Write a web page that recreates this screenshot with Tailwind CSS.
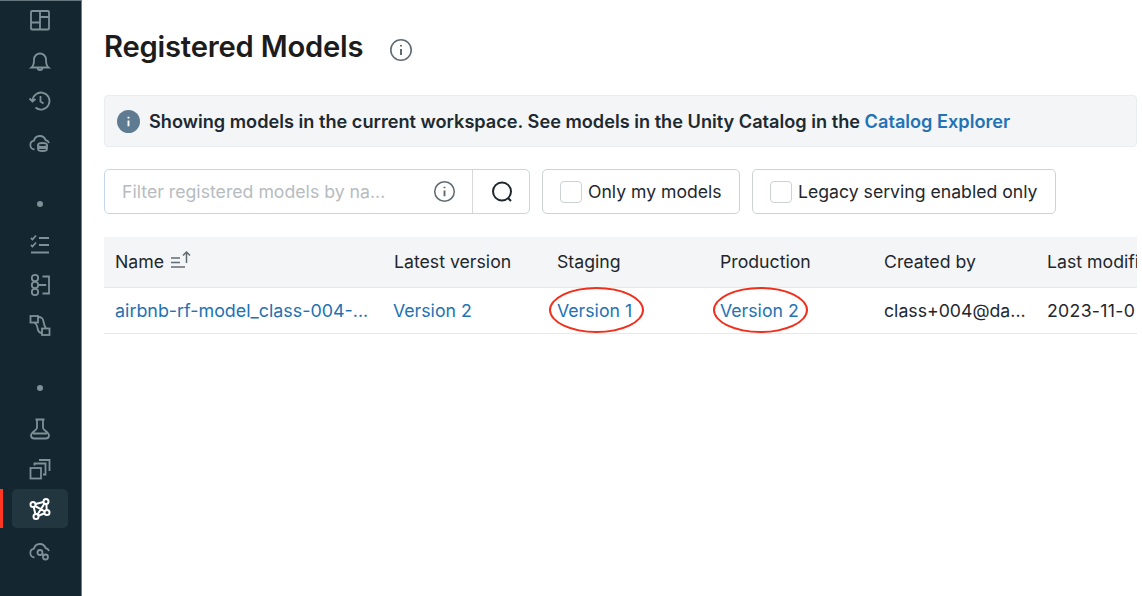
<!DOCTYPE html>
<html>
<head>
<meta charset="utf-8">
<script src="https://cdn.jsdelivr.net/npm/@tailwindcss/browser@4"></script>
</head>
<body class="bg-white">
<div class="flex h-[596px] w-[1142px] overflow-hidden font-['Inter','Liberation_Sans',sans-serif] text-[#1f272d]">
  <aside class="relative flex h-full w-[82px] shrink-0 flex-col items-center border-t border-r border-t-[#66767e] border-r-[#6d7f88] bg-[#14262f] pt-[7px] pr-[1px] text-[#7f9098]">
    <svg class="h-6 w-6" viewBox="0 0 24 24" fill="none" stroke="currentColor" stroke-width="1.800"><rect x="3" y="3" width="18" height="18.500" rx="1"/><path d="M12 3v18.500M3 14.500h9M12 9h9"/></svg>
    <svg class="mt-[17px] h-6 w-6" viewBox="0 0 24 24" fill="none" stroke="currentColor" stroke-width="1.800"><path d="M3.500 18.500h17c-2-1.500-2.500-3-2.500-8a6 6 0 0 0-12 0c0 5-.5 6.500-2.500 8zM9.500 18.500a2.500 2.500 0 0 0 5 0"/></svg>
    <svg class="mt-[16px] h-6 w-6" viewBox="0 0 24 24" fill="none" stroke="currentColor" stroke-width="1.800"><path d="M4.500 12a8.500 8.500 0 1 1 3 6.500M1.500 9.500l3 3 3-2.500M12.500 7v5.500l3 2"/></svg>
    <svg class="mt-[17px] h-6 w-6" viewBox="0 0 24 24" fill="none" stroke="currentColor" stroke-width="1.800"><path d="M6.500 19.500a4.500 4.500 0 0 1-.5-8.900 6 6 0 0 1 11.500-.6 4.500 4.500 0 0 1 3.500 3"/><ellipse cx="14.500" cy="15" rx="4.500" ry="2"/><path d="M10 15v4c0 1.100 2 2 4.500 2s4.500-.9 4.500-2v-4M10 18h9"/></svg>
    <div class="mt-[47px] h-[6px] w-[6px] rounded-full bg-[#7f9098]"></div>
    <svg class="mt-[26px] h-6 w-6" viewBox="0 0 24 24" fill="none" stroke="currentColor" stroke-width="1.800"><path d="M3 5l1.500 1.500L8 2.500M3 12l1.500 1.500 3.500-4M11 5h10M11 12h10M3 19.500h18"/></svg>
    <svg class="mt-[16px] h-6 w-6" viewBox="0 0 24 24" fill="none" stroke="currentColor" stroke-width="1.800"><circle cx="7" cy="5" r="3.200"/><circle cx="7" cy="12" r="3.200"/><circle cx="7" cy="19" r="3.200"/><path d="M10.200 12h8M14.500 3.500h6.500v17h-6.500"/></svg>
    <svg class="mt-[16px] h-6 w-6" viewBox="0 0 24 24" fill="none" stroke="currentColor" stroke-width="1.800"><rect x="2.500" y="3" width="7.500" height="6.500"/><rect x="14" y="15.500" width="7.500" height="6.500"/><path d="M10 4c4 0 5 1.500 5.500 4.500.4 2.500 1 5 2.500 7M6 9.500c2 .8 3 2.500 3.500 5.500.5 3 2 5 4.500 5"/></svg>
    <div class="mt-[48px] h-[6px] w-[6px] rounded-full bg-[#7f9098]"></div>
    <svg class="mt-[26px] h-6 w-6" viewBox="0 0 24 24" fill="none" stroke="currentColor" stroke-width="1.800"><path d="M7.500 2.500h9M9 2.500V11C9 13 3 15 3 18.500 3 20.500 4.500 21.500 6.500 21.500H17.500C19.500 21.500 21 20.500 21 18.500 21 15 15 13 15 11V2.500M5 16.500h14"/></svg>
    <svg class="mt-[16px] h-6 w-6" viewBox="0 0 24 24" fill="none" stroke="currentColor" stroke-width="1.800"><rect x="2.500" y="11" width="10.500" height="10.500"/><path d="M6.500 8.500V6.500H17.500V17.500H15M11 3h10.500V14"/></svg>
    <div class="mt-[8px] flex h-[39px] w-[56px] items-center justify-center rounded-[5px] bg-[#22363f] text-white">
      <svg class="h-6 w-6" viewBox="0 0 24 24" fill="none" stroke="currentColor" stroke-width="2"><circle cx="5" cy="7.500" r="2.500"/><circle cx="18" cy="4.500" r="2.500"/><circle cx="19" cy="15.500" r="2.500"/><circle cx="8" cy="19.500" r="2.500"/><path d="M7.500 7l8-2M7 9l9.800 5.300M16.500 6.500l-7 11M18.400 7l.3 6M10.400 18.800l6.300-2.500M5.700 10l1.700 7"/></svg>
    </div>
    <svg class="mt-[10px] h-6 w-6" viewBox="0 0 24 24" fill="none" stroke="currentColor" stroke-width="1.800"><path d="M6.500 19.500a4.500 4.500 0 0 1-.5-8.900 6 6 0 0 1 11.500-.6 4.500 4.500 0 0 1 3.500 3"/><circle cx="12" cy="14.500" r="2.500"/><circle cx="17.500" cy="19" r="2.500"/><path d="M14 16l1.500 1.500"/></svg>
    <div class="absolute left-0 top-[488px] h-[39px] w-[3px] bg-[#ff3621]"></div>
  </aside>
  <main class="min-w-0 flex-1 pl-[22px] pr-[5px]">
    <div class="flex h-[95px] items-start pt-[29px]">
      <h1 class="text-[29.200px] leading-[36px] font-semibold tracking-[-0.2px] whitespace-nowrap text-[#1c1c1c]">Registered Models</h1>
      <svg class="ml-[26px] mt-[9px] h-[24px] w-[24px] text-[#5f6b72]" viewBox="0 0 24 24" fill="none" stroke="currentColor" stroke-width="1.600"><circle cx="12" cy="12" r="10.200"/><path d="M12 11v6M12 7v1.600" stroke-width="2"/></svg>
    </div>
    <div class="flex h-[52px] items-center rounded-[4px] border border-[#e8edf0] bg-[#f3f5f7] pl-[12px]">
      <svg class="h-[23px] w-[23px]" viewBox="0 0 24 24"><circle cx="12" cy="12" r="12" fill="#5e7b92"/><path d="M12 11v6M12 7v1.800" stroke="#fff" stroke-width="2"/></svg>
      <p class="ml-[9px] text-[18.170px] leading-6 font-semibold whitespace-nowrap text-[#20292f]">Showing models in the current workspace. See models in the Unity Catalog in the <span class="text-[#2272b4]">Catalog Explorer</span></p>
    </div>
    <div class="mt-[22px] flex h-[45px] items-stretch">
      <div class="flex w-[426px] rounded-[5px] border border-[#c5d7e6]">
        <div class="flex w-[368px] items-center justify-between border-r border-[#d5d9dc] pl-[17px] pr-[16px]">
          <span class="pt-[2px] text-[17.700px] whitespace-nowrap text-[#b6bcc0]">Filter registered models by na...</span>
          <svg class="h-[23px] w-[23px] text-[#5f6b72]" viewBox="0 0 24 24" fill="none" stroke="currentColor" stroke-width="1.600"><circle cx="12" cy="12" r="10.200"/><path d="M12 11v6M12 7v1.600" stroke-width="2"/></svg>
        </div>
        <div class="flex flex-1 items-center justify-center pl-[2px]">
          <svg class="h-[24px] w-[24px] text-[#1f272d]" viewBox="0 0 24 24" fill="none" stroke="currentColor" stroke-width="2"><circle cx="12" cy="11.500" r="9"/><path d="M18 18l3 3"/></svg>
        </div>
      </div>
      <label class="ml-[12px] flex w-[198px] items-center rounded-[5px] border border-[#cdd2d5] pl-[17px]">
        <span class="h-[22px] w-[22px] rounded-[4px] border border-[#cdd2d5]"></span>
        <span class="ml-[6px] pt-[2px] text-[17.600px] whitespace-nowrap">Only my models</span>
      </label>
      <label class="ml-[12px] flex w-[304px] items-center rounded-[5px] border border-[#cdd2d5] pl-[17px]">
        <span class="h-[22px] w-[22px] rounded-[4px] border border-[#cdd2d5]"></span>
        <span class="ml-[6px] pt-[2px] text-[17.650px] whitespace-nowrap">Legacy serving enabled only</span>
      </label>
    </div>
    <div class="mt-[23px] overflow-hidden text-[17.700px]">
      <div class="grid h-[51px] grid-cols-[279px_163px_163px_164px_163px_1fr] items-center border-b border-[#e6e9eb] bg-[#f3f5f7] pl-[11px] whitespace-nowrap">
        <div class="flex items-center gap-[6px]">Name
          <svg class="mb-[3px] h-[22px] w-[22px] text-[#5f6b72]" viewBox="0 0 22 22" fill="none" stroke="currentColor" stroke-width="1.500"><path d="M1 9h9M1 13.500h9M1 18h14M16.500 14V3M13 6.500l3.500-3.500 3.500 3.500"/></svg>
        </div>
        <div>Latest version</div><div>Staging</div><div>Production</div><div>Created by</div><div class="overflow-hidden">Last modified</div>
      </div>
      <div class="grid h-[46px] grid-cols-[279px_163px_163px_164px_163px_1fr] items-center border-b border-[#e6e9eb] pt-[2px] pl-[11px] whitespace-nowrap">
        <a class="text-[17.900px] text-[#2272b4]">airbnb-rf-model_class-004-...</a>
        <a class="-ml-[1px] text-[#2272b4]">Version 2</a>
        <a class="relative text-[#2272b4]">Version 1<span class="absolute -top-[11px] -left-[8px] h-[46px] w-[95px] rounded-[50%] border-2 border-[#f0301c]"></span></a>
        <a class="relative text-[#2272b4]">Version 2<span class="absolute -top-[11px] -left-[7px] h-[46px] w-[95px] rounded-[50%] border-2 border-[#f0301c]"></span></a>
        <div>class+004@da...</div>
        <div class="overflow-hidden tracking-[0.3px]">2023-11-0</div>
      </div>
    </div>
  </main>
</div>
</body>
</html>
